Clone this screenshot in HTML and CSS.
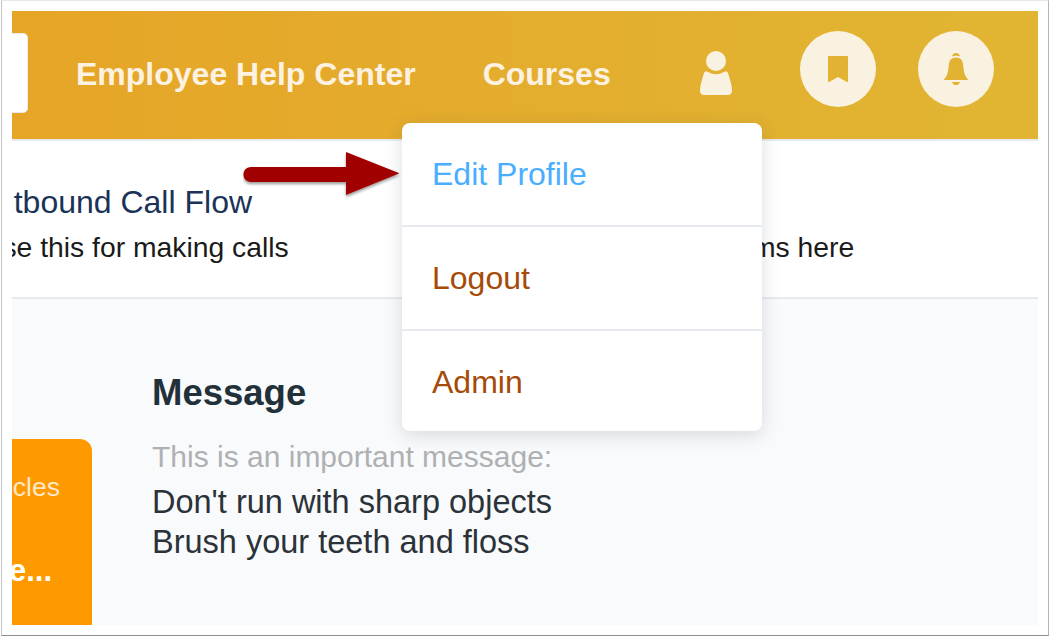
FILE: index.html
```html
<!DOCTYPE html>
<html>

<head>
    <title>Employee Help Center</title>
    <link rel="stylesheet" href="styles.css">
</head>

<body>
    <div class="shot">
        <div class="app">
            <div class="topbar">
                <div class="searchBox"></div>
                <a class="navLink navHelp">Employee Help Center</a>
                <a class="navLink navCourses">Courses</a>
                <svg class="userIcon" viewBox="0 0 32 44" width="32" height="44">
                    <circle cx="16" cy="10" r="10" fill="#faf2e1" />
                    <path d="M4 22 C4.500 20.500 6 20 7.500 20.800 C10 22.500 13 23.200 16 23.200 C19 23.200 22 22.500 24.500 20.800 C26 20 27.500 20.500 28 22 C29.500 27 31.500 33 32 38.500 C32.300 42 30.500 44 28 44 L4 44 C1.500 44 -0.300 42 0 38.500 C0.500 33 2.500 27 4 22 Z" fill="#faf2e1" />
                </svg>
                <div class="roundBtn bookmarkBtn">
                    <svg viewBox="0 0 20 26" width="20" height="26">
                        <path d="M1 0 H19 Q20 0 20 1 V25 Q20 26.500 18.500 25.800 L10 21 L1.500 25.800 Q0 26.500 0 25 V1 Q0 0 1 0 Z" fill="#e2b232" />
                    </svg>
                </div>
                <div class="roundBtn bellBtn">
                    <svg viewBox="0 0 26 32" width="26" height="32">
                        <path d="M9 3.500 C9.500 1 11 0 13 0 C15 0 16.500 1 17 3.500 C15 2.400 11 2.400 9 3.500 Z" fill="#e2b232" />
                        <path d="M13 4.500 C18.500 4.500 20 8.500 20.300 13 C20.600 18 21.500 23 25.600 27 L0.400 27 C4.500 23 5.400 18 5.700 13 C6 8.500 7.500 4.500 13 4.500 Z" fill="#e2b232" />
                        <path d="M9 29 H17 C16 31.500 14.500 32 13 32 C11.500 32 10 31.500 9 29 Z" fill="#e2b232" />
                    </svg>
                </div>
            </div>

            <div class="linkRow">
                <div class="linkItem">
                    <a class="linkTitle">Outbound Call Flow</a>
                    <div class="linkText">Use this for making calls</div>
                </div>
                <div class="linkItem linkRight">
                    <div class="linkText">Find forms here</div>
                </div>
            </div>

            <div class="lower">
                <div class="orangeCard">
                    <div class="cardSmall">Articles</div>
                    <div class="cardBig">More...</div>
                </div>
                <div class="message">
                    <h2 class="messageTitle">Message</h2>
                    <div class="messageSub">This is an important message:</div>
                    <div class="messageLine">Don't run with sharp objects</div>
                    <div class="messageLine">Brush your teeth and floss</div>
                </div>
            </div>

            <!-- arrow and menu lie over the page -->
            <svg class="arrow" viewBox="0 0 168 52" width="168" height="52">
                <defs>
                    <filter id="arrowShadow" x="-10%" y="-20%" width="120%" height="150%">
                        <feDropShadow dx="0" dy="2" stdDeviation="1.500" flood-color="#000" flood-opacity="0.4" />
                    </filter>
                </defs>
                <path d="M8 16 H103 V1 L156.500 22.300 L103 44 V31 H8 C-2 31 -2 16 8 16 Z" fill="#a10000" filter="url(#arrowShadow)" />
            </svg>

            <div class="menu">
                <a class="menuItem menuActive">Edit Profile</a>
                <a class="menuItem">Logout</a>
                <a class="menuItem">Admin</a>
            </div>
        </div>
    </div>
</body>

</html>
```

FILE: styles.css
```css
html,
body {
    margin: 0;
    background: #fff;
}

body {
    font-family: 'Liberation Sans', Arial, sans-serif;
    width: 1050px;
    height: 638px;
    overflow: hidden;
}

/* screenshot frame */
.shot {
    box-sizing: border-box;
    width: 1048px;
    height: 636px;
    margin-left: 1px;
    padding: 10px 9px 9px 10px;
    background: #fff;
    border-top: 1px solid #e8e8e8;
    border-left: 1px solid #c4c4c4;
    border-right: 1px solid #b4b4b4;
    border-bottom: 1px solid #8e8e8e;
}

.app {
    position: relative;
    width: 1026px;
    height: 614px;
    overflow: hidden;
    background: #fff;
}

/* top bar */
.topbar {
    display: flex;
    align-items: center;
    height: 128px;
    background: linear-gradient(90deg, #e6a527, #e1b533);
    border-bottom: 2px solid #e7ebef;
}

.searchBox {
    width: 16px;
    height: 80px;
    margin-right: 48px;
    margin-bottom: 4px;
    background: #fff;
    border: 1px solid #e7ebef;
    border-left: none;
    border-radius: 0 5px 5px 0;
    box-sizing: border-box;
}

.navLink {
    font-size: 32px;
    font-weight: bold;
    color: #fdf2e1;
}

.navHelp {
    margin-bottom: 2px;
}

.navCourses {
    margin-left: 67px;
    margin-bottom: 2px;
}

.userIcon {
    margin-left: 89px;
    margin-bottom: 4px;
}

.roundBtn {
    display: flex;
    align-items: center;
    justify-content: center;
    width: 76px;
    height: 76px;
    margin-bottom: 12px;
    border-radius: 50%;
    background: #faf2e1;
}

.bookmarkBtn {
    margin-left: 68px;
}

.bellBtn {
    margin-left: 42px;
}

/* links row */
.linkRow {
    display: flex;
    box-sizing: border-box;
    height: 158px;
    padding-top: 44px;
    border-bottom: 2px solid #e7ebef;
}

.linkItem {
    width: 420px;
    margin-left: -41px;
    white-space: nowrap;
}

.linkRight {
    width: auto;
    flex: 1;
    margin-left: 0;
    padding-top: 47px;
    padding-left: 265px;
}

.linkTitle {
    display: block;
    font-size: 32px;
    line-height: 34px;
    color: #1b3357;
}

.linkText {
    font-size: 28.300px;
    line-height: 30px;
    margin-top: 13px;
    margin-left: 11px;
    color: #1a1a1a;
}

.linkRight .linkText {
    margin-top: 0;
    margin-left: 0;
}

/* lower panel */
.lower {
    display: flex;
    height: 326px;
    background: #f9fafc;
}

.orangeCard {
    box-sizing: border-box;
    width: 80px;
    height: 186px;
    margin-top: 140px;
    padding-top: 33px;
    background: #ff9900;
    border-radius: 0 12px 0 0;
    overflow: hidden;
    display: flex;
    flex-direction: column;
    align-items: flex-end;
}

.cardSmall {
    font-size: 26.500px;
    line-height: 30px;
    color: #ffe9c8;
    margin-right: 32px;
    white-space: nowrap;
}

.cardBig {
    font-size: 31px;
    font-weight: bold;
    line-height: 32px;
    color: #fff;
    margin-top: 53px;
    margin-right: 40px;
    white-space: nowrap;
}

.message {
    margin-left: 60px;
    padding-top: 74px;
}

.messageTitle {
    margin: 0 0 24px;
    font-size: 36.500px;
    line-height: 40px;
    font-weight: bold;
    color: #22303a;
}

.messageSub {
    margin-bottom: 5px;
    font-size: 30px;
    line-height: 40px;
    color: #aeb0b2;
}

.messageLine {
    font-size: 32.500px;
    line-height: 40px;
    color: #2b3238;
}

/* dropdown */
.menu {
    position: absolute;
    left: 390px;
    top: 112px;
    width: 360px;
    background: #fff;
    border-radius: 8px;
    box-shadow: 0 4px 18px rgba(60, 70, 85, 0.18);
}

.menuItem {
    display: block;
    box-sizing: border-box;
    height: 104px;
    padding: 31px 30px 0;
    font-size: 32px;
    line-height: 40px;
    color: #a64a07;
    border-bottom: 2px solid #e7ebef;
}

.menuItem:last-child {
    height: 100px;
    border-bottom: none;
}

.menuActive {
    color: #4aaeff;
}

.arrow {
    position: absolute;
    left: 231px;
    top: 140px;
}
```
